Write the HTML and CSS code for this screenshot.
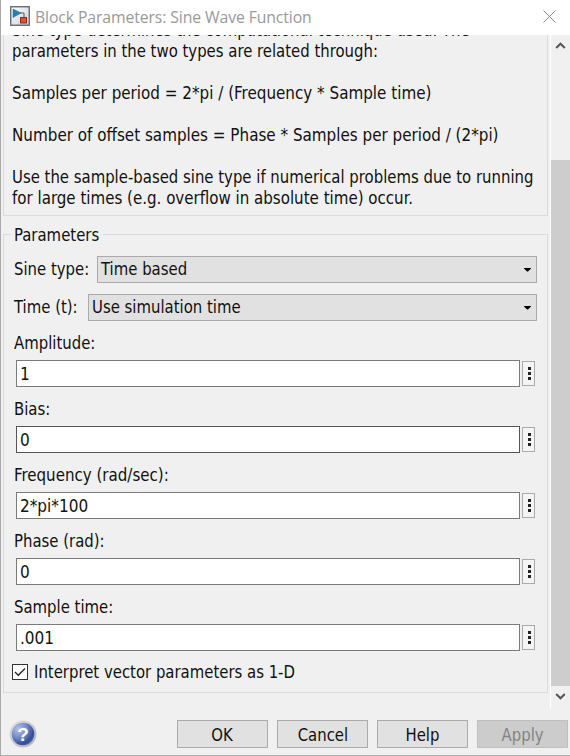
FILE: index.html
```
<!DOCTYPE html>
<html lang="en">
<head>
<meta charset="utf-8">
<title>Block Parameters: Sine Wave Function</title>
<link rel="stylesheet" href="styles.css">
</head>
<body>
<div class="dialog">
  <header class="titlebar">
    <svg class="app-icon" width="20" height="20" viewBox="0 0 20 20">
      <defs><linearGradient id="ib" x1="0" y1="0" x2="1" y2="1"><stop offset="0" stop-color="#fff"/><stop offset="1" stop-color="#c8d0d4"/></linearGradient></defs>
      <rect x=".75" y=".75" width="18.5" height="18.5" fill="url(#ib)" stroke="#59616a" stroke-width="1.3"/>
      <path d="M3 3l8 4-8 4.5z" fill="#2581b5" stroke="#12669a" stroke-width=".5"/>
      <path d="M10 7h4v5" fill="none" stroke="#555" stroke-width="1"/>
      <rect x="10.5" y="11.5" width="6" height="5.5" fill="#dc5529" stroke="#8c2c13"/>
    </svg>
    <span class="title">Block Parameters: Sine Wave Function</span>
    <svg class="close" width="13" height="13" viewBox="0 0 13 13"><path d="M.5 .5l12 12M12.5 .5l-12 12" stroke="#858585" fill="none"/></svg>
  </header>
  <main class="viewport">
    <div class="content">
      <section class="description">
        <p><span class="t">Sine type determines the computational technique used. The</span><br><span class="t">parameters in the two types are related through:</span></p>
        <p><span class="t wide">Samples per period = 2*pi / (Frequency * Sample time)</span></p>
        <p><span class="t wide">Number of offset samples = Phase * Samples per period / (2*pi)</span></p>
        <p><span class="t">Use the sample-based sine type if numerical problems due to running</span><br><span class="t mid">for large times (e.g. overflow in absolute time) occur.</span></p>
      </section>
      <fieldset class="params">
        <legend><span class="t">Parameters</span></legend>
        <div class="row"><div class="name sine"><span class="t">Sine type:</span></div><div class="combo"><span class="t">Time based</span><i class="arrow"></i></div></div>
        <div class="row second"><div class="name time"><span class="t">Time (t):</span></div><div class="combo"><span class="t">Use simulation time</span><i class="arrow"></i></div></div>
        <div class="field"><label><span class="t">Amplitude:</span></label><div class="entry"><div class="input"><span class="t">1</span></div><div class="more"><i></i><i></i><i></i></div></div></div>
        <div class="field"><label><span class="t">Bias:</span></label><div class="entry"><div class="input dark"><span class="t">0</span></div><div class="more"><i></i><i></i><i></i></div></div></div>
        <div class="field"><label><span class="t mid">Frequency (rad/sec):</span></label><div class="entry"><div class="input"><span class="t">2*pi*100</span></div><div class="more"><i></i><i></i><i></i></div></div></div>
        <div class="field"><label><span class="t">Phase (rad):</span></label><div class="entry"><div class="input"><span class="t">0</span></div><div class="more"><i></i><i></i><i></i></div></div></div>
        <div class="field"><label><span class="t">Sample time:</span></label><div class="entry"><div class="input"><span class="t">.001</span></div><div class="more"><i></i><i></i><i></i></div></div></div>
        <div class="check"><svg width="16" height="16" viewBox="0 0 16 16"><rect x=".5" y=".5" width="15" height="15" fill="#fff" stroke="#333"/><path d="M3 8l3.300 3.300L13 4.500" fill="none" stroke="#222" stroke-width="1.3"/></svg><span class="t">Interpret vector parameters as 1-D</span></div>
      </fieldset>
    </div>
    <div class="scrollbar">
      <svg width="19" height="20" viewBox="0 0 19 20"><path d="M5.2 13l4.300-4.300 4.300 4.300" fill="none" stroke="#555" stroke-width="2"/></svg>
      <div class="track"><div class="thumb"></div></div>
      <svg width="19" height="22" viewBox="0 0 19 22"><path d="M5.2 8l4.300 4.300L13.800 8" fill="none" stroke="#555" stroke-width="2"/></svg>
    </div>
  </main>
  <footer class="footer">
    <svg class="help" width="28" height="28" viewBox="0 0 28 28">
      <defs>
        <radialGradient id="ball" cx=".3" cy=".28" r=".8"><stop offset="0" stop-color="#b5c2e6"/><stop offset=".5" stop-color="#7187c4"/><stop offset=".85" stop-color="#314b98"/><stop offset="1" stop-color="#5069ac"/></radialGradient>
        <linearGradient id="rim" x1="0" y1="0" x2="1" y2="1"><stop offset="0" stop-color="#e2e2e5"/><stop offset="1" stop-color="#b0b0b8"/></linearGradient>
      </defs>
      <circle cx="14" cy="14" r="13.500" fill="url(#rim)"/><circle cx="14" cy="14" r="11.300" fill="url(#ball)"/>
      <text class="mark" x="14" y="21" text-anchor="middle">?</text>
    </svg>
    <div class="buttons"><div class="btn"><span class="t">OK</span></div><div class="btn"><span class="t">Cancel</span></div><div class="btn"><span class="t">Help</span></div><div class="btn disabled"><span class="t">Apply</span></div></div>
  </footer>
</div>
</body>
</html>
```
FILE: styles.css
```
* { box-sizing: border-box; }
body { margin: 0; background: #f0f0f0; color: #111; font: 17px/21px "DejaVu Sans Condensed", "DejaVu Sans", sans-serif; white-space: nowrap; }
.t { display: inline-block; vertical-align: top; transform: scaleX(.974); transform-origin: 0 50%; }
.mid { transform: scaleX(.985); }
.wide { transform: scaleX(.992); }
.dialog { width: 570px; height: 756px; overflow: hidden; display: flex; flex-direction: column; border-left: 1px solid #aaa; border-bottom: 1px solid #aaa; }
.titlebar { height: 35px; flex: none; background: #fff; display: flex; align-items: center; padding: 0 14px 3px 9px; }
.title { font: 16px/20px "Open Sans", sans-serif; letter-spacing: -0.1px; transform: scaleX(.985); transform-origin: 0 50%; color: #999; margin-left: 5px; padding-top: 1px; flex: 1; }
.close { flex: none; }
.viewport { height: 673px; flex: none; display: flex; overflow: hidden; }
.content { width: 549px; flex: none; padding-left: 2px; overflow: hidden; }
.description { width: 545px; height: 200px; margin-top: -19px; border: 1px solid #dcdcdc; padding: 3px 0 0 8px; }
p { margin: 0 0 21px; }
.params { position: relative; width: 545px; height: 459px; margin: 18px 0 0; border: 1px solid #dcdcdc; padding: 21px 10px 0; }
legend { position: absolute; top: -10px; left: 7px; width: 92px; padding: 0 3px; background: #f0f0f0; }
.row { display: flex; align-items: center; height: 27px; line-height: 23px; }
.row.second { margin-top: 11px; margin-bottom: 11px; }
.name { flex: none; }
.sine { width: 83px; }
.time { width: 74px; }
.combo { flex: 1; height: 27px; border: 1px solid #aaa; background: #e1e1e1; display: flex; align-items: center; justify-content: space-between; padding: 0 5px 0 3px; }
.arrow { width: 7px; height: 4px; background: #000; clip-path: polygon(0 0, 100% 0, 100% 25%, 57% 100%, 43% 100%, 0 25%); }
.field { height: 66px; }
.field label { display: block; height: 28px; line-height: 22px; }
.entry { display: flex; align-items: center; gap: 2px; padding-left: 2px; }
.input { width: 504px; height: 27px; background: #fff; border: 1px solid #7a7a7a; padding-left: 3px; line-height: 26px; }
.input .t { transform: none; }
.dark { border-color: #555; }
.more { width: 13px; height: 25px; border: 1px solid #aaa; background: #f4f4f4; display: flex; flex-direction: column; align-items: center; justify-content: center; gap: 2px; padding-left: 1px; }
.more i { width: 3px; height: 3px; background: #222; }
.check { display: flex; align-items: center; gap: 6px; height: 22px; line-height: 23px; margin-top: -1px; margin-left: -2px; }
.scrollbar { width: 20px; flex: none; border-left: 1px solid #fff; display: flex; flex-direction: column; }
.track { flex: 1; padding-top: 105px; }
.thumb { height: 526px; background: #cdcdcd; }
.footer { flex: 1; display: flex; justify-content: space-between; padding: 12px 2px 0 8px; }
.mark { font: bold 19px "Liberation Sans", sans-serif; fill: #fff; }
.buttons { display: flex; gap: 9px; }
.btn { width: 91px; height: 28px; border: 1px solid #aaa; background: #e1e1e1; text-align: center; line-height: 28px; }
.btn .t { transform-origin: 50% 50%; }
.disabled { background: #ccc; border-color: #bfbfbf; color: #838383; }
```
